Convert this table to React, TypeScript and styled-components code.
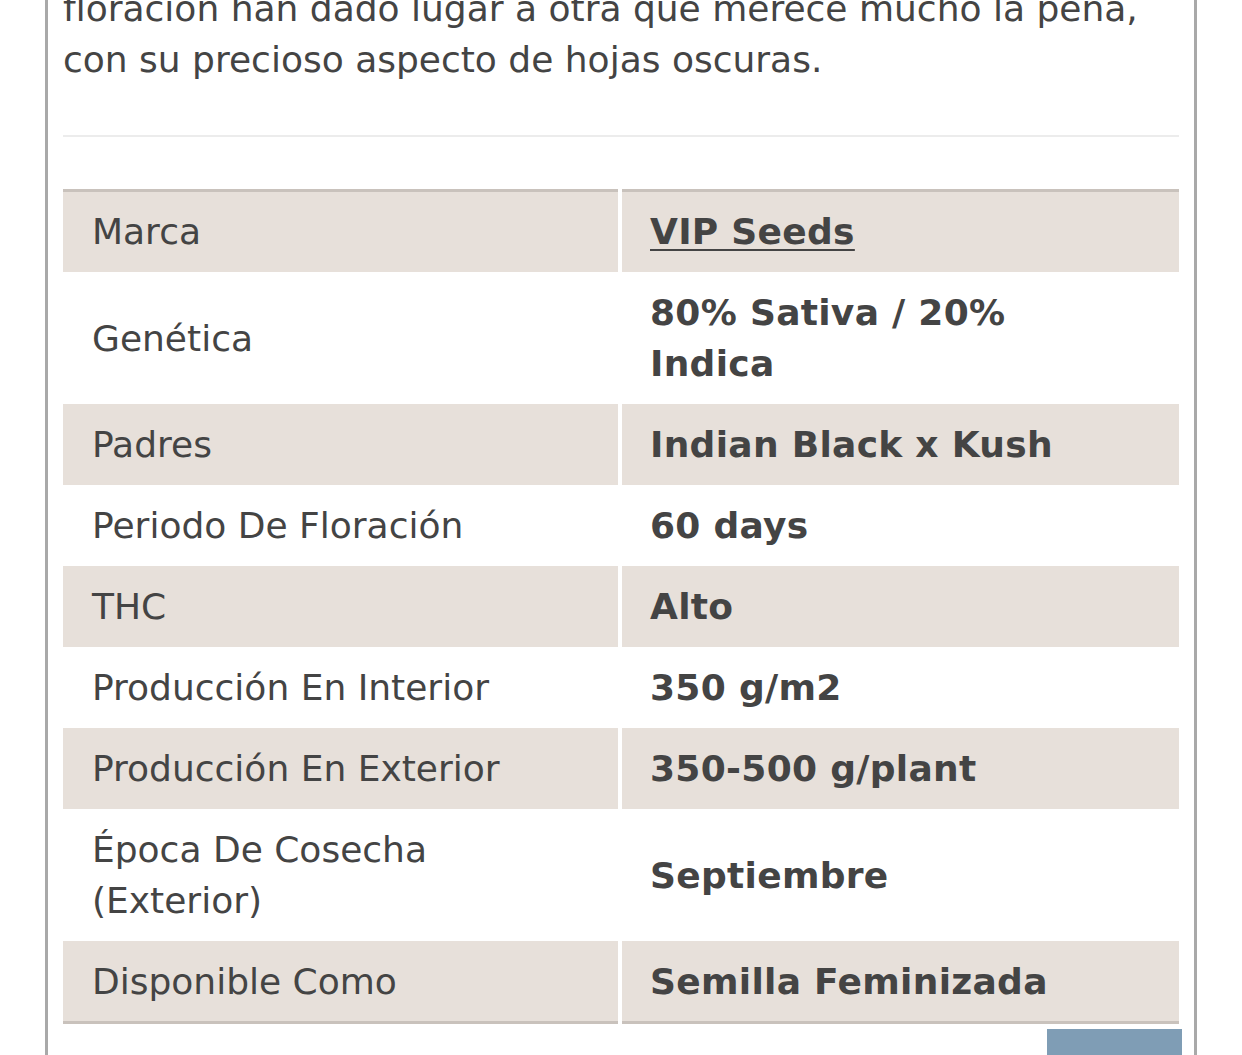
import styled, { createGlobalStyle } from 'styled-components';

const GlobalStyle = createGlobalStyle`
    html, body {
        margin: 0;
        padding: 0;
        background: #fff;
    }
    body {
        font-family: "DejaVu Sans", Verdana, sans-serif;
        color: #444;
        overflow: hidden;
    }
`

const specs = [
    { label: 'Marca', value: 'VIP Seeds', link: true },
    { label: 'Genética', value: '80% Sativa / 20% Indica' },
    { label: 'Padres', value: 'Indian Black x Kush' },
    { label: 'Periodo De Floración', value: '60 days' },
    { label: 'THC', value: 'Alto' },
    { label: 'Producción En Interior', value: '350 g/m2' },
    { label: 'Producción En Exterior', value: '350-500 g/plant' },
    { label: 'Época De Cosecha (Exterior)', value: 'Septiembre' },
    { label: 'Disponible Como', value: 'Semilla Feminizada' },
]

const App = (): JSX.Element => {
    return (
        <>
            <GlobalStyle />
            <Frame>
                <Description>
                    floración han dado lugar a otra que merece mucho la pena,
                    <br />
                    con su precioso aspecto de hojas oscuras.
                </Description>
                <Divider />
                <SpecTable>
                    {specs.map((row, i) => (
                        <SpecRow key={row.label}>
                            <LabelCell $striped={i % 2 === 0} $first={i === 0} $last={i === specs.length - 1}>
                                {row.label}
                            </LabelCell>
                            <ValueCell $striped={i % 2 === 0} $first={i === 0} $last={i === specs.length - 1}>
                                {row.link ? <BrandLink href="#">{row.value}</BrandLink> : row.value}
                            </ValueCell>
                        </SpecRow>
                    ))}
                </SpecTable>
                <ScrollButton />
            </Frame>
        </>
    )
}

export default App

const Frame = styled.div`
    box-sizing: border-box;
    width: 1152px;
    min-height: 100vh;
    margin-left: 45px;
    padding: 0 15px;
    border-left: 3px solid #a9a9a9;
    border-right: 3px solid #a9a9a9;
    display: flex;
    flex-direction: column;
`
const Description = styled.p`
    margin: -17px 0 0;
    font-size: 36px;
    line-height: 51px;
    white-space: nowrap;
`
const Divider = styled.hr`
    margin: 50px 0 0;
    border: none;
    height: 2px;
    background: #ececec;
`
const SpecTable = styled.div`
    margin-top: 52px;
    display: flex;
    flex-direction: column;
`
const SpecRow = styled.div`
    display: grid;
    grid-template-columns: 555px 557px;
    column-gap: 4px;
`

type CellProps = { $striped: boolean; $first: boolean; $last: boolean }

const Cell = styled.div<CellProps>`
    display: flex;
    align-items: center;
    padding: 15px 20px 15px 28px;
    font-size: 36px;
    line-height: 51px;
    background: ${(p) => (p.$striped ? '#e7e0da' : '#fff')};
    border-top: ${(p) => (p.$first ? '3px solid #c9c2bc' : 'none')};
    border-bottom: ${(p) => (p.$last ? '3px solid #c9c2bc' : 'none')};
    ${(p) => (p.$first ? 'padding-top: 14px;' : '')}
    ${(p) => (p.$last ? 'padding-bottom: 14px;' : '')}
`
const LabelCell = styled(Cell)`
    padding-left: 29px;
`
const ValueCell = styled(Cell)`
    padding-right: 60px;
    font-weight: bold;
    letter-spacing: 0.3px;
`
const BrandLink = styled.a`
    color: #444;
    text-decoration: underline;
    text-decoration-thickness: 2px;
    text-underline-offset: 5px;
`
const ScrollButton = styled.div`
    align-self: flex-end;
    width: 135px;
    height: 40px;
    margin-top: 5px;
    margin-right: -3px;
    background: #7f9db5;
`
